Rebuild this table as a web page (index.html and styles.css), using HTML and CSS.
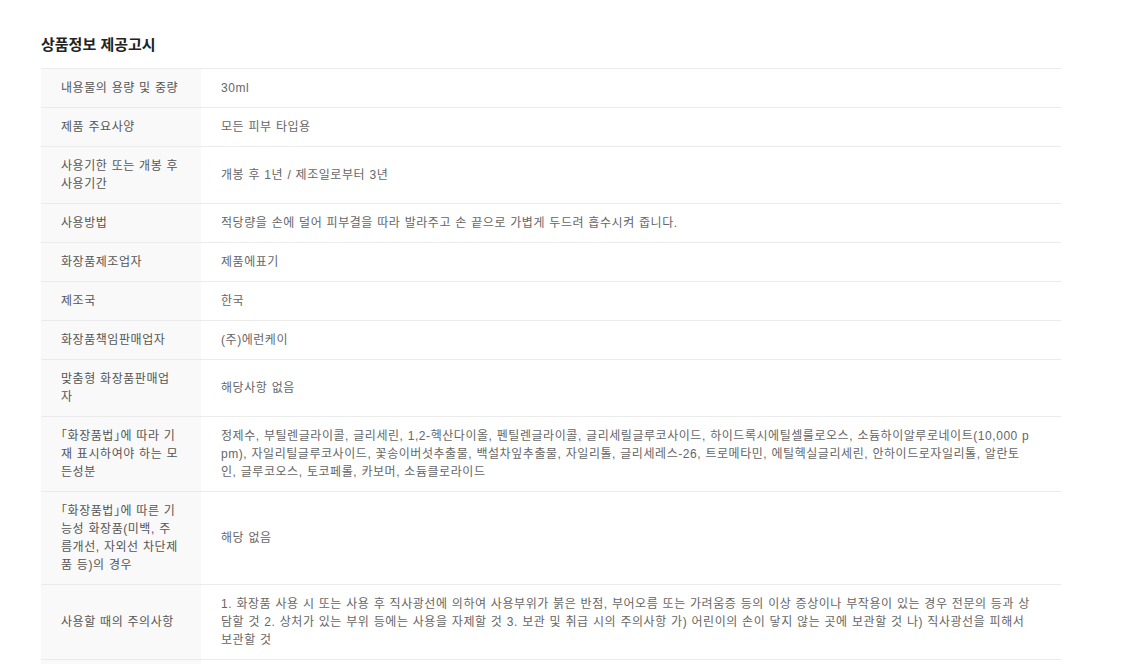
FILE: index.html
```html
<!DOCTYPE html>
<html lang="ko">
<head>
<meta charset="utf-8">
<title>상품정보 제공고시</title>
<link rel="stylesheet" href="styles.css">
</head>
<body>
<section class="notice">
  <h2 class="notice-title">상품정보 제공고시</h2>
  <table class="notice-table">
    <tbody>
      <tr><th>내용물의 용량 및 중량</th><td>30ml</td></tr>
      <tr><th>제품 주요사양</th><td>모든 피부 타입용</td></tr>
      <tr><th>사용기한 또는 개봉 후 사용기간</th><td>개봉 후 1년 / 제조일로부터 3년</td></tr>
      <tr><th>사용방법</th><td>적당량을 손에 덜어 피부결을 따라 발라주고 손 끝으로 가볍게 두드려 흡수시켜 줍니다.</td></tr>
      <tr><th>화장품제조업자</th><td>제품에표기</td></tr>
      <tr><th>제조국</th><td>한국</td></tr>
      <tr><th>화장품책임판매업자</th><td>(주)에런케이</td></tr>
      <tr><th>맞춤형 화장품판매업자</th><td>해당사항 없음</td></tr>
      <tr><th>「화장품법」에 따라 기재 표시하여야 하는 모든성분</th><td>정제수, 부틸렌글라이콜, 글리세린, 1,2-헥산다이올, 펜틸렌글라이콜, 글리세릴글루코사이드, 하이드록시에틸셀룰로오스, 소듐하이알루로네이트(10,000 ppm), 자일리틸글루코사이드, 꽃송이버섯추출물, 백설차잎추출물, 자일리톨, 글리세레스-26, 트로메타민, 에틸헥실글리세린, 안하이드로자일리톨, 알란토인, 글루코오스, 토코페롤, 카보머, 소듐클로라이드</td></tr>
      <tr><th>「화장품법」에 따른 기능성 화장품(미백, 주름개선, 자외선 차단제품 등)의 경우</th><td>해당 없음</td></tr>
      <tr><th>사용할 때의 주의사항</th><td>1. 화장품 사용 시 또는 사용 후 직사광선에 의하여 사용부위가 붉은 반점, 부어오름 또는 가려움증 등의 이상 증상이나 부작용이 있는 경우 전문의 등과 상담할 것 2. 상처가 있는 부위 등에는 사용을 자제할 것 3. 보관 및 취급 시의 주의사항 가) 어린이의 손이 닿지 않는 곳에 보관할 것 나) 직사광선을 피해서 보관할 것</td></tr>
      <tr class="row-next"><th></th><td></td></tr>
    </tbody>
  </table>
</section>
</body>
</html>
```

FILE: styles.css
```css
* { box-sizing: border-box; }
html, body { margin: 0; padding: 0; background: #fff; }
body {
  font-family: "Liberation Sans", "Noto Sans CJK KR", sans-serif;
  color: #666;
}
.notice {
  width: 1020px;
  margin-left: 41px;
  padding-top: 34px;
}
.notice-title {
  margin: 0 0 14px;
  font-family: "Noto Sans CJK KR", sans-serif;
  font-size: 15px;
  line-height: 20px;
  font-weight: 700;
  color: #222;
}
.notice-table {
  width: 100%;
  border-collapse: collapse;
  border-top: 1px solid #ebebeb;
  table-layout: fixed;
}
.notice-table th,
.notice-table td {
  border-bottom: 1px solid #ebebeb;
  padding: 10px 20px;
  font-size: 12px;
  line-height: 18px;
  letter-spacing: 0.55px;
  word-spacing: 0.4px;
  text-align: left;
  vertical-align: middle;
  word-break: break-all;
  font-feature-settings: "halt";
}
.notice-table th {
  width: 160px;
  background: #f9f9f9;
  font-weight: 400;
  color: #555;
}
.notice-table td {
  padding-right: 30px;
  color: #666;
}
.row-next th,
.row-next td {
  height: 39px;
}
```
